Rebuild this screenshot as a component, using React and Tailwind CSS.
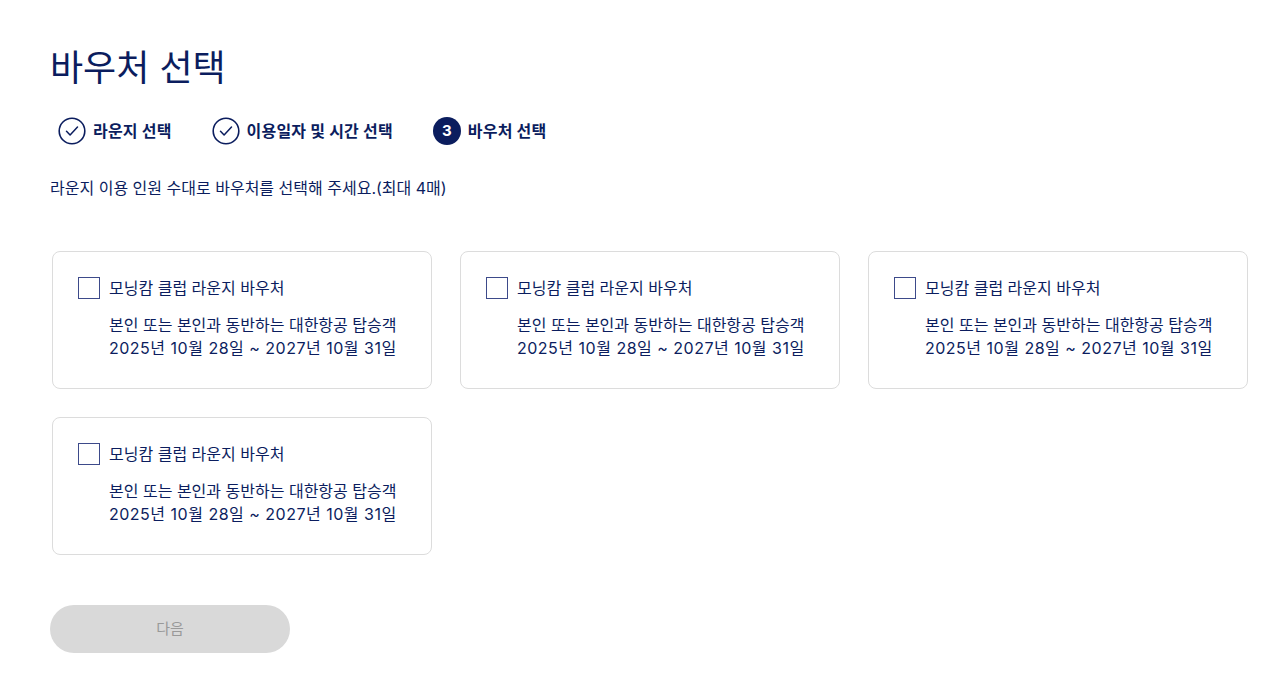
import React, { useState } from "react";

const NAVY = "text-[#0b1d5e]";

const steps = [
  { label: "라운지 선택", done: true },
  { label: "이용일자 및 시간 선택", done: true },
  { label: "바우처 선택", done: false, num: 3 },
];

const vouchers = [1, 2, 3, 4].map((id) => ({
  id,
  title: "모닝캄 클럽 라운지 바우처",
  target: "본인 또는 본인과 동반하는 대한항공 탑승객",
  period: "2025년 10월 28일 ~ 2027년 10월 31일",
}));

const CheckCircle = () => (
  <svg width="28" height="28" viewBox="0 0 28 28" fill="none">
    <circle cx="14" cy="14" r="12.8" stroke="#0b1d5e" strokeWidth="1.6" />
    <path
      d="M8.5 14.2l3.6 3.8 7.4-8"
      stroke="#0b1d5e"
      strokeWidth="1.5"
      strokeLinecap="round"
      strokeLinejoin="round"
    />
  </svg>
);

const App = () => {
  const [selected, setSelected] = useState([]);

  const toggle = (id) => {
    setSelected((prev) =>
      prev.includes(id) ? prev.filter((v) => v !== id) : [...prev, id],
    );
  };

  return (
    <div
      className={`min-h-[686px] bg-white px-[50px] pt-[43px] ${NAVY}`}
      style={{ fontFamily: 'Inter, "Noto Sans CJK KR", sans-serif' }}
    >
      <h1 className="text-[36px] leading-[50px] font-normal">바우처 선택</h1>

      <div className="mt-[24px] flex items-center gap-[40px] pl-[8px]">
        {steps.map((s) => (
          <div key={s.label} className="flex items-center gap-[7px]">
            {s.done ? (
              <CheckCircle />
            ) : (
              <span className="flex h-[28px] w-[28px] items-center justify-center rounded-full bg-[#0b1d5e] text-[15px] font-bold text-white">
                {s.num}
              </span>
            )}
            <span className="text-[16px] font-bold tracking-[0.2px]">
              {s.label}
            </span>
          </div>
        ))}
      </div>

      <p className="mt-[32px] text-[16px] leading-[22px]">
        라운지 이용 인원 수대로 바우처를 선택해 주세요.(최대 4매)
      </p>

      <div className="mt-[52px] grid grid-cols-[380px_380px_380px] gap-x-[28px] gap-y-[28px] pl-[2px]">
        {vouchers.map((v) => (
          <label
            key={v.id}
            className="flex h-[138px] cursor-pointer flex-col rounded-[8px] border border-[#dcdcdc] px-[25px] pt-[24px]"
          >
            <div className="flex items-center gap-[9px]">
              <input
                type="checkbox"
                checked={selected.includes(v.id)}
                onChange={() => toggle(v.id)}
                className="h-[22px] w-[22px] appearance-none border-[1.5px] border-[#3d4a8a] bg-white checked:bg-[#0b1d5e]"
              />
              <span className="text-[16px] leading-[24px]">{v.title}</span>
            </div>
            <div className="mt-[14px] pl-[31px] text-[16px] leading-[23px]">
              <p>{v.target}</p>
              <p className="tracking-[0.5px]">{v.period}</p>
            </div>
          </label>
        ))}
      </div>

      <button
        disabled={selected.length === 0}
        className="mt-[50px] h-[48px] w-[240px] rounded-full bg-[#d9d9d9] text-[15px] text-[#999999]"
      >
        다음
      </button>
    </div>
  );
};

export default App;
